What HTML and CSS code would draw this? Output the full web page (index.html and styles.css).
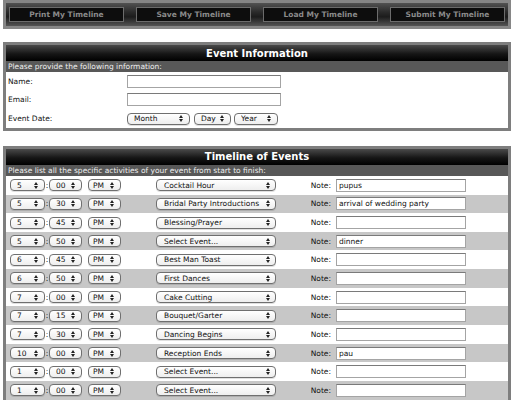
FILE: index.html
```html
<!DOCTYPE html>
<html>
<head>
<meta charset="utf-8">
<link rel="stylesheet" href="styles.css">
</head>
<body>
<div class="page">
  <div class="toolbar">
    <span class="tbtn">Print My Timeline</span>
    <span class="tbtn">Save My Timeline</span>
    <span class="tbtn">Load My Timeline</span>
    <span class="tbtn">Submit My Timeline</span>
  </div>

  <section class="panel">
    <div class="phead">Event Information</div>
    <div class="psub">Please provide the following information:</div>
    <div class="irow"><span class="lbl">Name:</span><span class="inp w154"></span></div>
    <div class="irow"><span class="lbl">Email:</span><span class="inp w154"></span></div>
    <div class="irow"><span class="lbl">Event Date:</span>
      <span class="sel month"><span class="t">Month</span><span class="arr"></span></span>
      <span class="sel day"><span class="t">Day</span><span class="arr"></span></span>
      <span class="sel year"><span class="t">Year</span><span class="arr"></span></span>
    </div>
  </section>

  <section class="panel second">
    <div class="phead">Timeline of Events</div>
    <div class="psub">Please list all the specific activities of your event from start to finish:</div>
    <div class="rows">
      <div class="trow"><span class="sel hr"><span class="t">5</span><span class="arr"></span></span><span class="colon">:</span><span class="sel mn"><span class="t">00</span><span class="arr"></span></span><span class="sel ap"><span class="t">PM</span><span class="arr"></span></span><span class="sel ev"><span class="t">Cocktail Hour</span><span class="arr"></span></span><span class="note">Note:</span><span class="inp w130">pupus</span></div>
      <div class="trow"><span class="sel hr"><span class="t">5</span><span class="arr"></span></span><span class="colon">:</span><span class="sel mn"><span class="t">30</span><span class="arr"></span></span><span class="sel ap"><span class="t">PM</span><span class="arr"></span></span><span class="sel ev"><span class="t">Bridal Party Introductions</span><span class="arr"></span></span><span class="note">Note:</span><span class="inp w130">arrival of wedding party</span></div>
      <div class="trow"><span class="sel hr"><span class="t">5</span><span class="arr"></span></span><span class="colon">:</span><span class="sel mn"><span class="t">45</span><span class="arr"></span></span><span class="sel ap"><span class="t">PM</span><span class="arr"></span></span><span class="sel ev"><span class="t">Blessing/Prayer</span><span class="arr"></span></span><span class="note">Note:</span><span class="inp w130"></span></div>
      <div class="trow"><span class="sel hr"><span class="t">5</span><span class="arr"></span></span><span class="colon">:</span><span class="sel mn"><span class="t">50</span><span class="arr"></span></span><span class="sel ap"><span class="t">PM</span><span class="arr"></span></span><span class="sel ev"><span class="t">Select Event...</span><span class="arr"></span></span><span class="note">Note:</span><span class="inp w130">dinner</span></div>
      <div class="trow"><span class="sel hr"><span class="t">6</span><span class="arr"></span></span><span class="colon">:</span><span class="sel mn"><span class="t">45</span><span class="arr"></span></span><span class="sel ap"><span class="t">PM</span><span class="arr"></span></span><span class="sel ev"><span class="t">Best Man Toast</span><span class="arr"></span></span><span class="note">Note:</span><span class="inp w130"></span></div>
      <div class="trow"><span class="sel hr"><span class="t">6</span><span class="arr"></span></span><span class="colon">:</span><span class="sel mn"><span class="t">50</span><span class="arr"></span></span><span class="sel ap"><span class="t">PM</span><span class="arr"></span></span><span class="sel ev"><span class="t">First Dances</span><span class="arr"></span></span><span class="note">Note:</span><span class="inp w130"></span></div>
      <div class="trow"><span class="sel hr"><span class="t">7</span><span class="arr"></span></span><span class="colon">:</span><span class="sel mn"><span class="t">00</span><span class="arr"></span></span><span class="sel ap"><span class="t">PM</span><span class="arr"></span></span><span class="sel ev"><span class="t">Cake Cutting</span><span class="arr"></span></span><span class="note">Note:</span><span class="inp w130"></span></div>
      <div class="trow"><span class="sel hr"><span class="t">7</span><span class="arr"></span></span><span class="colon">:</span><span class="sel mn"><span class="t">15</span><span class="arr"></span></span><span class="sel ap"><span class="t">PM</span><span class="arr"></span></span><span class="sel ev"><span class="t">Bouquet/Garter</span><span class="arr"></span></span><span class="note">Note:</span><span class="inp w130"></span></div>
      <div class="trow"><span class="sel hr"><span class="t">7</span><span class="arr"></span></span><span class="colon">:</span><span class="sel mn"><span class="t">30</span><span class="arr"></span></span><span class="sel ap"><span class="t">PM</span><span class="arr"></span></span><span class="sel ev"><span class="t">Dancing Begins</span><span class="arr"></span></span><span class="note">Note:</span><span class="inp w130"></span></div>
      <div class="trow"><span class="sel hr"><span class="t">10</span><span class="arr"></span></span><span class="colon">:</span><span class="sel mn"><span class="t">00</span><span class="arr"></span></span><span class="sel ap"><span class="t">PM</span><span class="arr"></span></span><span class="sel ev"><span class="t">Reception Ends</span><span class="arr"></span></span><span class="note">Note:</span><span class="inp w130">pau</span></div>
      <div class="trow"><span class="sel hr"><span class="t">1</span><span class="arr"></span></span><span class="colon">:</span><span class="sel mn"><span class="t">00</span><span class="arr"></span></span><span class="sel ap"><span class="t">PM</span><span class="arr"></span></span><span class="sel ev"><span class="t">Select Event...</span><span class="arr"></span></span><span class="note">Note:</span><span class="inp w130"></span></div>
      <div class="trow"><span class="sel hr"><span class="t">1</span><span class="arr"></span></span><span class="colon">:</span><span class="sel mn"><span class="t">00</span><span class="arr"></span></span><span class="sel ap"><span class="t">PM</span><span class="arr"></span></span><span class="sel ev"><span class="t">Select Event...</span><span class="arr"></span></span><span class="note">Note:</span><span class="inp w130"></span></div>
    </div>
  </section>
</div>
</body>
</html>
```

FILE: styles.css
```css
html, body {
  margin: 0;
  padding: 0;
  background: #fff;
}
body {
  font-family: "DejaVu Sans", Verdana, sans-serif;
  font-size: 7.5px;
  color: #111;
}
.page {
  width: 508px;
  margin-left: 3px;
}

/* toolbar */
.toolbar {
  height: 29px;
  box-sizing: border-box;
  border: 3px solid #868686;
  background: linear-gradient(#525252, #2a2a2a 40%, #1c1c1c 60%, #545454);
  display: flex;
  justify-content: space-between;
  align-items: center;
  padding: 0 3px;
}
.tbtn {
  width: 115px;
  height: 15px;
  box-sizing: border-box;
  border: 1px solid #6c6c6c;
  background: #0d0d0d;
  color: #8a8a8a;
  font-weight: bold;
  font-size: 7.5px;
  display: flex;
  align-items: center;
  justify-content: center;
}

/* panels */
.panel {
  margin-top: 13px;
  border: 3px solid #7e7e7e;
  background: #fff;
}
.panel.second {
  margin-top: 15px;
}
.phead {
  height: 16px;
  background: linear-gradient(#4a4a4a, #161616 55%, #000);
  color: #fff;
  font-weight: bold;
  font-size: 10px;
  display: flex;
  align-items: center;
  justify-content: center;
}
.psub {
  height: 11px;
  line-height: 11px;
  background: #585858;
  color: #eee;
  padding-left: 2px;
}

/* info rows */
.irow {
  height: 18.65px;
  display: flex;
  align-items: center;
  padding-left: 2px;
}
.lbl {
  width: 119px;
}

/* inputs */
.inp {
  height: 13px;
  box-sizing: border-box;
  border: 1px solid #a4a4a4;
  border-top-color: #7a7a7a;
  background: #fff;
  padding-left: 2px;
  line-height: 11px;
  white-space: nowrap;
  overflow: hidden;
}
.w154 { width: 154px; }
.w130 { width: 130px; }

/* aqua-like selects */
.sel {
  height: 12px;
  box-sizing: border-box;
  border: 1px solid #6f6f6f;
  border-radius: 4px;
  background: linear-gradient(#ffffff, #eeeeee);
  box-shadow: 0 1px 0 rgba(0, 0, 0, 0.12);
  display: flex;
  align-items: center;
  padding-left: 6px;
  white-space: nowrap;
}
.sel .t {
  flex: 1;
  overflow: hidden;
}
.sel .arr {
  display: flex;
  flex-direction: column;
  align-items: center;
  gap: 1px;
  margin-right: 6px;
}
.sel .arr::before,
.sel .arr::after {
  content: "";
  width: 0;
  height: 0;
  border-left: 2px solid transparent;
  border-right: 2px solid transparent;
}
.sel .arr::before {
  border-bottom: 3px solid #222;
}
.sel .arr::after {
  border-top: 3px solid #222;
}

.month { width: 63px; margin-right: 4px; }
.day { width: 37px; margin-right: 3px; }
.year { width: 44px; }

/* timeline rows */
.trow {
  height: 18.65px;
  display: flex;
  align-items: center;
  padding-left: 4px;
}
.trow:nth-child(even) {
  background: #c7c7c7;
}
.hr { width: 35px; }
.mn { width: 33px; }
.ap { width: 33px; margin-left: 6px; padding-left: 4px; }
.ev { width: 120px; margin-left: 35px; padding-left: 7px; }
.ev .arr { margin-right: 5px; }
.colon {
  width: 4px;
  text-align: center;
}
.note {
  width: 60px;
  box-sizing: border-box;
  text-align: right;
  padding-right: 5px;
}
```
